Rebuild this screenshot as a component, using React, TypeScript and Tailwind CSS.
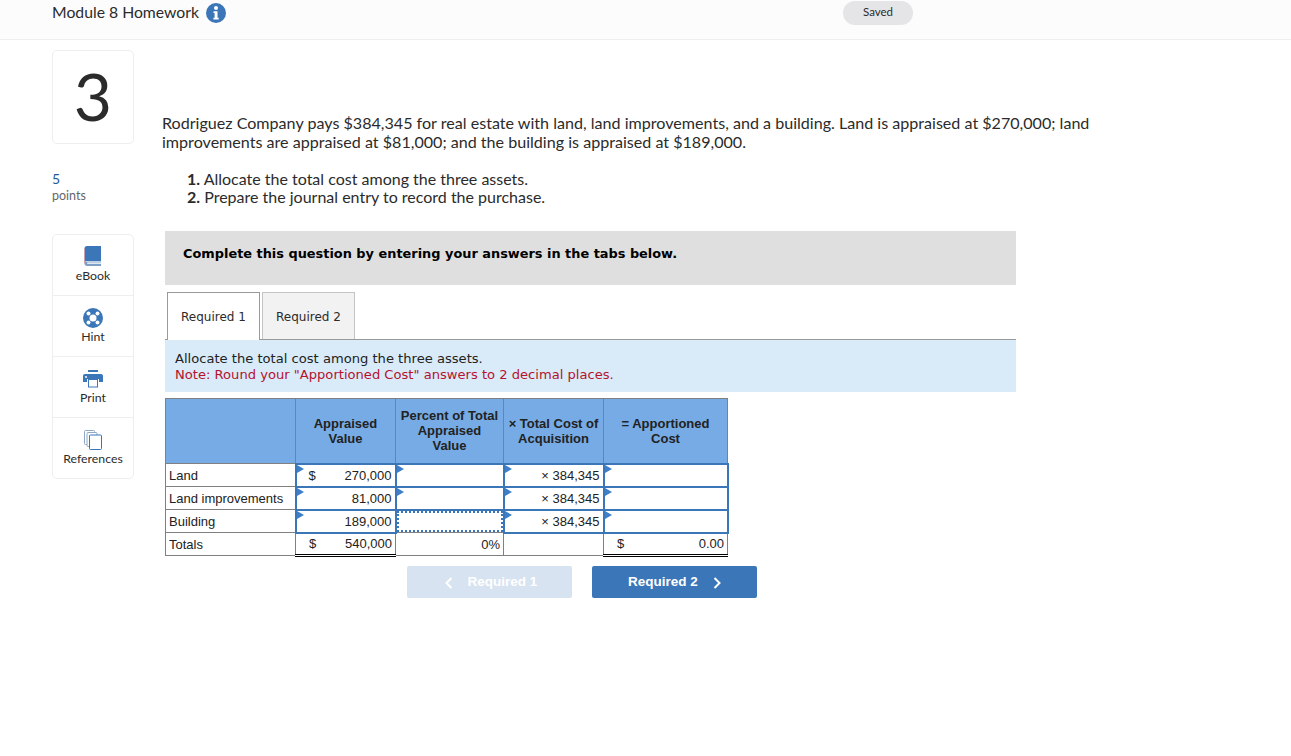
const proxima = "font-['Lato','Open_Sans',sans-serif]";

const InfoIcon = () => (
  <svg width="20" height="20" viewBox="0 0 20 20">
    <circle cx="10" cy="10" r="10" fill="#3b76b8" />
    <circle cx="10" cy="5" r="2" fill="#fff" />
    <path d="M7.5 8.2h4v6.6h1.2v1.7H7.4v-1.7h1.2v-4.9H7.5z" fill="#fff" />
  </svg>
);

const BookIcon = () => (
  <svg width="18" height="20" viewBox="0 0 18 20">
    <path d="M3 0h14v15H3C1.6 15 .8 15.6.5 16.5V2.500C.5 1 1.500 0 3 0z" fill="#3b76b8" />
    <path d="M.5 17.300C.5 16 1.600 15.500 3 15.500h14v1H3.200v1.300H17V20H3C1.500 20 .5 19 .5 17.300z" fill="#7f9fc8" />
    <path d="M0.500 2.500v15" stroke="#c9a0b0" strokeWidth="1" />
  </svg>
);

const HintIcon = () => (
  <svg width="20" height="20" viewBox="0 0 20 20">
    <circle cx="10" cy="10" r="10" fill="#3b76b8" />
    <circle cx="5.500" cy="5.500" r="2" fill="#fff" />
    <circle cx="14.500" cy="5.500" r="2" fill="#fff" />
    <circle cx="5.500" cy="14.500" r="2" fill="#fff" />
    <circle cx="14.500" cy="14.500" r="2" fill="#fff" />
    <circle cx="10" cy="10" r="3.500" fill="#fff" />
  </svg>
);

const PrintIcon = () => (
  <svg width="20" height="18" viewBox="0 0 20 18">
    <path d="M5 0h10v2H5z" fill="#3b76b8" />
    <path d="M2 4h16c1.100 0 2 .9 2 2v6h-4V9H4v3H0V6c0-1.100.9-2 2-2z" fill="#3b76b8" />
    <rect x="5.500" y="9.500" width="9" height="7.500" fill="#fff" stroke="#3b76b8" />
    <circle cx="3" cy="7" r="1" fill="#fff" />
  </svg>
);

const RefIcon = () => (
  <svg width="18" height="20" viewBox="0 0 18 20">
    <rect x=".5" y=".5" width="10" height="14" rx="1" fill="#fff" stroke="#8fa8c8" />
    <rect x="3" y="2.500" width="10" height="14" rx="1" fill="#fff" stroke="#8fa8c8" />
    <rect x="5.500" y="5" width="12" height="14.500" rx="1" fill="#fff" stroke="#3b76b8" />
  </svg>
);

const sideItems = [
  { label: "eBook", icon: <BookIcon /> },
  { label: "Hint", icon: <HintIcon /> },
  { label: "Print", icon: <PrintIcon /> },
  { label: "References", icon: <RefIcon /> },
];

const Flag = () => (
  <span className="absolute left-0 top-0 h-0 w-0 border-y-[4px] border-l-[7px] border-y-transparent border-l-[#3d7fc9]" />
);

const InputCell = ({ dollar, value, dotted }: { dollar?: boolean; value?: string; dotted?: boolean }) => (
  <td className={`relative p-0 ${dotted ? "border border-[#808080]" : "border-2 border-[#3b76b8]"}`}>
    <div
      className={`flex items-center justify-between pl-[12px] pr-[3px] ${
        dotted ? "h-[21px] border-2 border-dotted border-[#3b76b8]" : "h-[20px]"
      }`}
    >
      <span>{dollar ? "$" : ""}</span>
      <span>{value}</span>
    </div>
    {!dotted && <Flag />}
  </td>
);

const rows = [
  { name: "Land", dollar: true, value: "270,000" },
  { name: "Land improvements", value: "81,000" },
  { name: "Building", value: "189,000", dotted: true },
];

const App = () => {
  return (
    <div className="min-h-[756px] bg-white text-[#2b2b2b]">
      <header className="flex h-[40px] items-start border-b border-[#eeeeee] bg-[#fcfcfc] pl-[52px]">
        <div className={`${proxima} flex w-[791px] items-start gap-[7px] pt-[3px] text-[15.750px]`}>
          <span className="leading-[18px]">Module 8 Homework</span>
          <InfoIcon />
        </div>
        <div className={`${proxima} mt-[1px] flex h-[24px] w-[70px] items-center justify-center rounded-full bg-[#e5e5e8] pb-[2px] text-[11.500px]`}>
          Saved
        </div>
      </header>

      <div className="flex pl-[52px]">
        <aside className={`${proxima} w-[82px] shrink-0 pt-[10px]`}>
          <div className="flex h-[94px] items-center justify-center rounded-[5px] border border-[#eeeeee] pb-[3px] text-[66px] font-normal leading-none">
            3
          </div>
          <div className="mt-[26px] text-[14px] leading-[18px] text-[#1f5a96]">5</div>
          <div className="text-[12.500px] leading-[15px] text-[#666]">points</div>
          <div className="mt-[31px] rounded-[5px] border border-[#eeeeee]">
            {sideItems.map((item, i) => (
              <div
                key={item.label}
                className={`flex flex-col items-center ${i > 0 ? "h-[61px] border-t border-[#eeeeee] pt-[12px]" : "h-[60px] pt-[11px]"}`}
              >
                <div className="flex h-[20px] items-center">{item.icon}</div>
                <div className={`text-[12.300px] leading-[16px] ${i > 0 ? "mt-[1px]" : "mt-[2px]"}`}>{item.label}</div>
              </div>
            ))}
          </div>
        </aside>

        <main className="pl-[28px] pt-[73px]">
          <p className={`${proxima} w-[940px] text-[16.100px] leading-[19px]`}>
            Rodriguez Company pays $384,345 for real estate with land, land improvements, and a building. Land is appraised at $270,000; land improvements are appraised at $81,000; and the building is appraised at $189,000.
          </p>
          <ol className={`${proxima} mt-[19px] pl-[25px] text-[16px] leading-[18px]`}>
            <li><b>1.</b> Allocate the total cost among the three assets.</li>
            <li><b>2.</b> Prepare the journal entry to record the purchase.</li>
          </ol>

          <div className="ml-[3px] mt-[25px] w-[851px] font-['DejaVu_Sans',sans-serif]">
            <div className="flex h-[54px] items-start bg-[#dfdfdf] pl-[18px] pt-[15px] text-[12.900px] font-bold leading-[16px] text-black">
              Complete this question by entering your answers in the tabs below.
            </div>

            <div className="mt-[7px] flex h-[48px] gap-[2px] border-b border-[#999] pl-[2px] text-[12px]">
              <div className="z-10 flex h-[48px] w-[93px] items-center justify-center border border-b-0 border-[#999] bg-white">
                Required 1
              </div>
              <div className="flex h-[47px] w-[93px] items-center justify-center border border-b-0 border-[#c4c4c4] bg-[#f2f2f2] pt-[1px]">
                Required 2
              </div>
            </div>

            <div className="h-[52px] bg-[#d9ebf9] pl-[10px] pt-[11px] text-[13.100px] leading-[16px]">
              <div className="text-[#222]">Allocate the total cost among the three assets.</div>
              <div className="text-[#b5122d]">Note: Round your "Apportioned Cost" answers to 2 decimal places.</div>
            </div>

            <table className="mt-[6px] w-[562px] table-fixed border-collapse font-['Liberation_Sans',sans-serif] text-[13px] leading-[15px] text-[#222]">
              <colgroup>
                <col className="w-[130px]" />
                <col className="w-[100px]" />
                <col className="w-[108px]" />
                <col className="w-[100px]" />
                <col className="w-[124px]" />
              </colgroup>
              <thead>
                <tr className="h-[65px] bg-[#77abe5] text-center font-bold">
                  <th className="border border-[#808080]"></th>
                  <th className="border border-[#808080] px-1">Appraised Value</th>
                  <th className="border border-[#808080] px-0">Percent of Total<br />Appraised<br />Value</th>
                  <th className="border border-[#808080] px-0">× Total Cost of Acquisition</th>
                  <th className="border border-[#808080] px-1">= Apportioned Cost</th>
                </tr>
              </thead>
              <tbody>
                {rows.map((r) => (
                  <tr key={r.name} className="h-[23px]">
                    <td className="border border-[#808080] pl-[3px]">{r.name}</td>
                    <InputCell dollar={r.dollar} value={r.value} />
                    <InputCell dotted={r.dotted} />
                    <InputCell value="× 384,345" />
                    <InputCell />
                  </tr>
                ))}
                <tr className="h-[23px]">
                  <td className="border border-[#808080] pl-[3px]">Totals</td>
                  <td className="border border-[#808080] border-b-[3px] border-b-black border-double px-[3px] pl-[13px]">
                    <div className="flex justify-between"><span>$</span><span>540,000</span></div>
                  </td>
                  <td className="border border-[#808080] pr-[3px] text-right">0%</td>
                  <td className="border border-[#808080]"></td>
                  <td className="border border-[#808080] border-b-[3px] border-b-black border-double px-[3px] pl-[13px]">
                    <div className="flex justify-between"><span>$</span><span>0.00</span></div>
                  </td>
                </tr>
              </tbody>
            </table>

            <div className="ml-[242px] mt-[9px] flex gap-[20px] font-['Liberation_Sans',sans-serif] text-[13.500px] font-bold text-white">
              <div className="flex h-[32px] w-[165px] items-center justify-center gap-[15px] rounded-[2px] bg-[#d7e3f1] pl-[3px] pt-[1px]">
                <svg width="8" height="12" viewBox="0 0 8 12" fill="none" stroke="#fff" strokeWidth="2"><path d="M6.500 1 1.500 6l5 5" /></svg>
                Required 1
              </div>
              <div className="flex h-[32px] w-[165px] items-center justify-center gap-[15px] rounded-[2px] bg-[#3b76b8] pt-[1px]">
                Required 2
                <svg width="8" height="12" viewBox="0 0 8 12" fill="none" stroke="#fff" strokeWidth="2"><path d="m1.500 1 5 5-5 5" /></svg>
              </div>
            </div>
          </div>
        </main>
      </div>
    </div>
  );
};

export default App;
